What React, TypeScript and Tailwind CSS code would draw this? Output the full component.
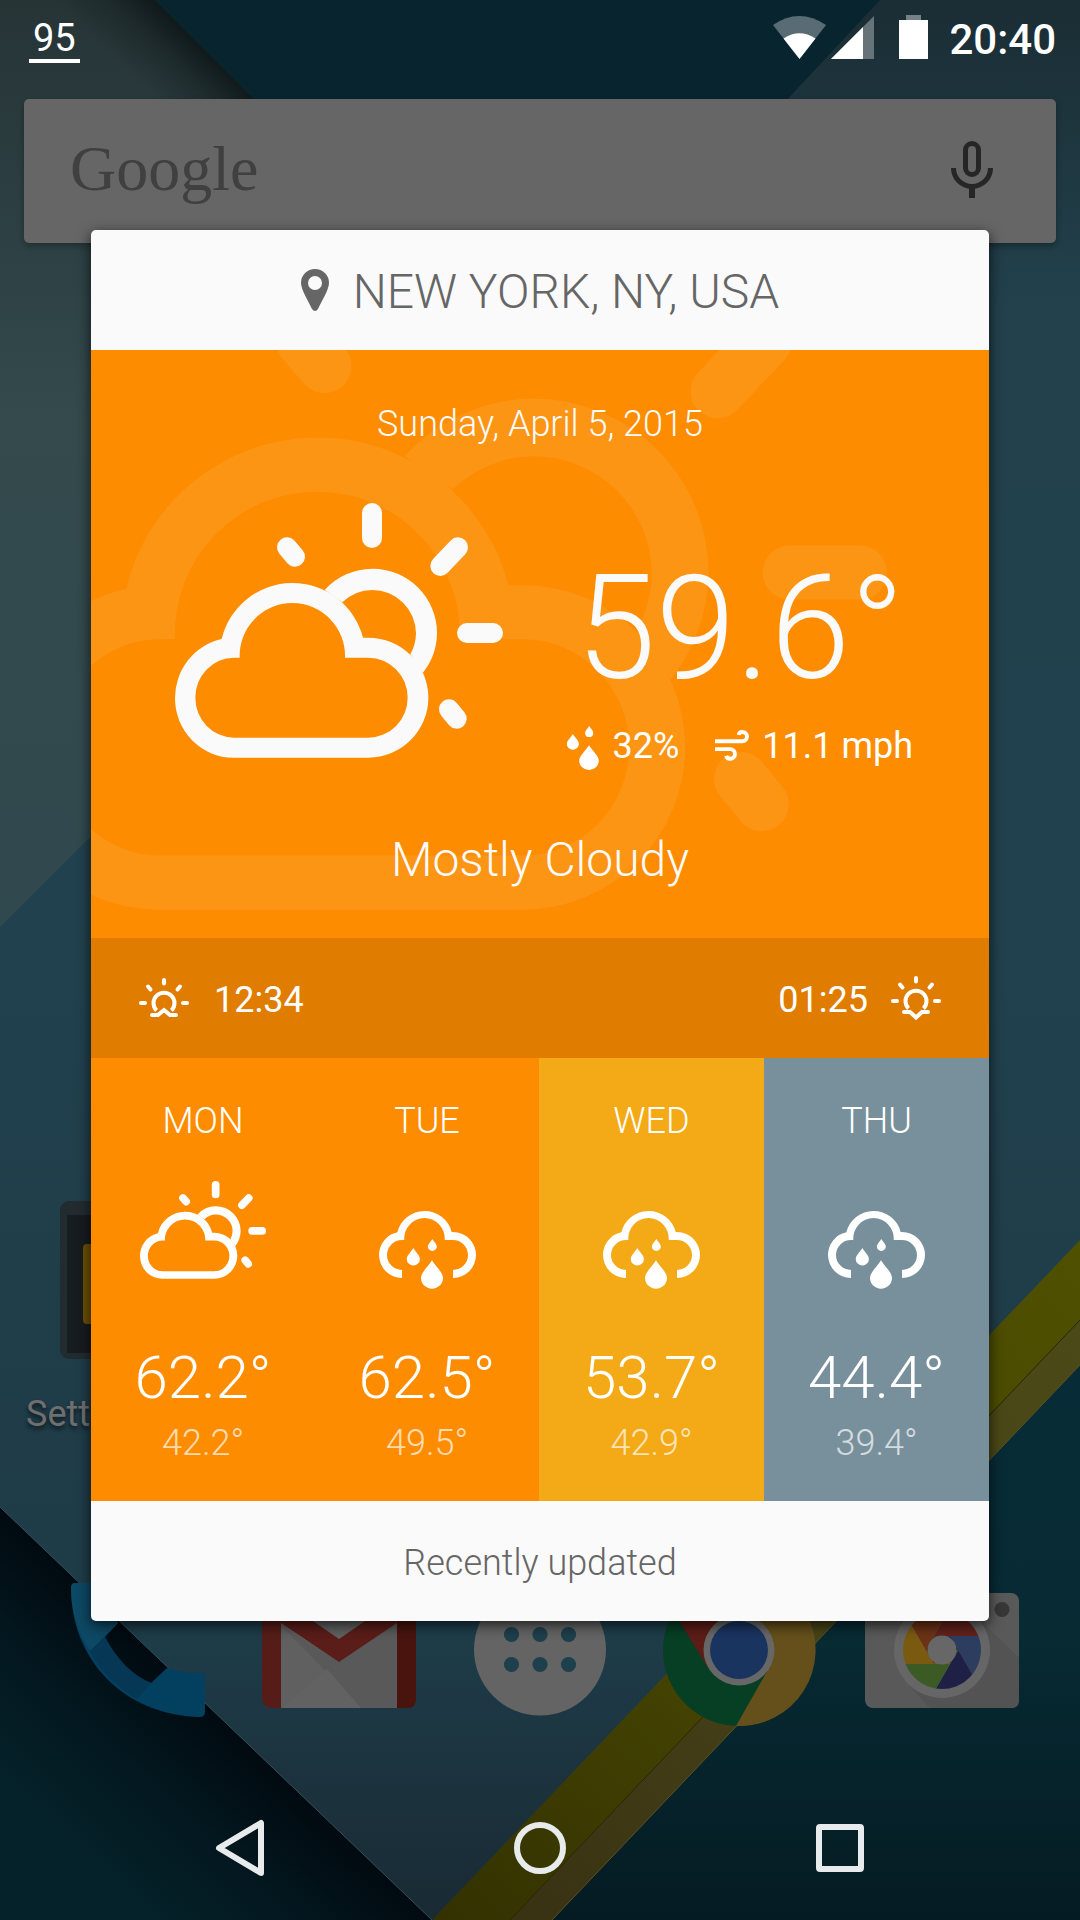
import React from "react";

const DROP = "M0 0C11 19 33 36 33 53A33 32 0 0 1-33 53C-33 36-11 19 0 0Z";

function PartlyCloudy({ className }: { className?: string }) {
  return (
    <svg viewBox="75 69 984 764" className={className} aria-hidden="true">
      <path
        fill="currentColor"
        fillRule="evenodd"
        d="M250 833A175 178 0 0 1 75 655A178 181 0 0 1 215 477A218.4 218.4 0 0 1 639 473H655A180 180 0 0 1 655 833ZM252 773H655A118 120 0 0 0 655 533H585A158.1 158.1 0 1 0 269 533Q262 533 252 533A116 120 0 0 0 252 773Z"
      />
      <path
        fill="currentColor"
        d="M524 330A194 194 0 0 1 667 266A194 194 0 0 1 861 460A194 194 0 0 1 819 578L781 523A131 131 0 0 0 798 460A131 131 0 0 0 667 330A131 131 0 0 0 577 367Z"
      />
      <g stroke="currentColor" strokeWidth="60" strokeLinecap="round">
        <path d="M666 99V174" />
        <path d="M951 459H1029" />
        <path d="M924 202L871 258" />
        <path d="M411 202L435 230" />
        <path d="M897 688L920 716" />
      </g>
    </svg>
  );
}

function Rain({ className }: { className?: string }) {
  return (
    <svg viewBox="0 0 291 236" className={className} fill="currentColor" aria-hidden="true">
      <path d="M69 204A69 69 0 0 1 0 135A69 69 0 0 1 55 67A84 84 0 0 1 218 66H222A69 69 0 0 1 222 204V180A45 45 0 0 0 222 90H197A60.7 60.7 0 1 0 76 90H69A45 45 0 0 0 69 180Z" />
      <path transform="translate(159 151)" d={DROP} />
      <path transform="translate(103 114) scale(.6 .62)" d={DROP} />
      <path transform="translate(160 87) scale(.41 .42)" d={DROP} />
    </svg>
  );
}

function Humidity() {
  return (
    <svg viewBox="84 546 96 144" className="h-12 w-8" fill="currentColor" aria-hidden="true">
      <path transform="translate(150 616) scale(.89 .87)" d={DROP} />
      <path transform="translate(101.5 582) scale(.55 .56)" d={DROP} />
      <path transform="translate(150.500 558) scale(.37 .39)" d={DROP} />
    </svg>
  );
}

function Wind() {
  return (
    <svg viewBox="528 570 103 94" className="w-[34px]" fill="none" stroke="currentColor" strokeWidth="12" aria-hidden="true">
      <path d="M528 604H611A14 14 0 0 0 611 576Q601 576 600 585" />
      <path d="M528 628H574A14.500 14.500 0 0 1 574 657Q564 657 562 648" />
    </svg>
  );
}

function SunEdge({ rising }: { rising: boolean }) {
  return (
    <svg viewBox="0 0 52 46" className="h-[46px] w-[52px]" fill="none" stroke="currentColor" strokeWidth="4" aria-hidden="true">
      <g transform={rising ? "translate(0 2)" : undefined}>
        <path d="M18.500 33.500A10.500 10.500 0 1 1 33.500 33.500" />
        <g strokeLinecap="round">
          <path d="M26 3V6.500" />
          <path d="M3 26H7" />
          <path d="M45 26H49" />
          <path d="M10 9.500L12.500 12.500" />
          <path d="M42 9.500L39.500 12.500" />
        </g>
      </g>
      <path strokeLinecap="round" d={rising ? "M14 40H20L26 35L32 40H38" : "M14 37H20L26 42.500L32 37H38"} />
    </svg>
  );
}

function Wallpaper() {
  return (
    <svg
      viewBox="0 0 1080 1920"
      preserveAspectRatio="xMidYMid slice"
      className="h-full w-full [grid-area:1/1]"
      aria-hidden="true"
    >
      <defs>
        <linearGradient id="mid" x1="0" y1="0" x2="0" y2="1">
          <stop offset="0" stopColor="#1b2d35" />
          <stop offset=".05" stopColor="#1d333b" />
          <stop offset=".16" stopColor="#22414d" />
          <stop offset=".5" stopColor="#21414e" />
          <stop offset=".75" stopColor="#1f3c48" />
          <stop offset=".85" stopColor="#1e3c49" />
          <stop offset="1" stopColor="#192a34" />
        </linearGradient>
        <linearGradient id="left" x1="0" y1="0" x2="0" y2="1">
          <stop offset="0" stopColor="#263436" />
          <stop offset=".25" stopColor="#2d4044" />
          <stop offset=".45" stopColor="#344a4d" />
          <stop offset="1" stopColor="#30494e" />
        </linearGradient>
        <linearGradient id="leftShade" gradientUnits="userSpaceOnUse" x1="206" y1="50" x2="156" y2="100">
          <stop offset="0" stopColor="#0c1415" stopOpacity=".85" />
          <stop offset=".5" stopColor="#0c1415" stopOpacity=".3" />
          <stop offset="1" stopColor="#0c1415" stopOpacity="0" />
        </linearGradient>
        <linearGradient id="low" gradientUnits="userSpaceOnUse" x1="216" y1="1714" x2="76" y2="1860">
          <stop offset="0" stopColor="#010a10" />
          <stop offset=".45" stopColor="#03171f" />
          <stop offset="1" stopColor="#05222a" />
        </linearGradient>
        <linearGradient id="lowRight" x1="0" y1="0" x2="0" y2="1">
          <stop offset="0" stopColor="#082c37" />
          <stop offset=".5" stopColor="#072a33" />
          <stop offset="1" stopColor="#051b23" />
        </linearGradient>
        <linearGradient id="yellow" gradientUnits="userSpaceOnUse" x1="432" y1="1920" x2="1080" y2="1240">
          <stop offset="0" stopColor="#333100" />
          <stop offset=".4" stopColor="#454403" />
          <stop offset="1" stopColor="#4f5000" />
        </linearGradient>
        <linearGradient id="olive" gradientUnits="userSpaceOnUse" x1="530" y1="1920" x2="1080" y2="1340">
          <stop offset="0" stopColor="#393213" />
          <stop offset=".5" stopColor="#474318" />
          <stop offset="1" stopColor="#4b4917" />
        </linearGradient>
      </defs>
      <rect width="1080" height="1920" fill="url(#mid)" />
      <path d="M155 0H880L520 386Z" fill="#08252f" />
      <path d="M0 0H155L541 386L0 927Z" fill="url(#left)" />
      <path d="M0 0H155L541 386L0 927Z" fill="url(#leftShade)" />
      <path d="M0 1507L432 1920H0Z" fill="url(#low)" />
      <path d="M0 1507L432 1920" stroke="#35505b" strokeWidth="1" />
      <path d="M552 1920L1080 1365V1920Z" fill="url(#lowRight)" />
      <path d="M432 1920L1080 1240V1320L510 1920Z" fill="url(#yellow)" />
      <path d="M510 1920L1080 1320V1365L552 1920Z" fill="url(#olive)" />
      <path d="M510 1920L1080 1320" stroke="#2b2900" strokeWidth="1" />
      <path d="M552 1920L1080 1365" stroke="#57501f" strokeWidth="1" />
    </svg>
  );
}

function PhoneIcon() {
  return (
    <svg viewBox="0 0 156 156" className="size-[156px]" aria-hidden="true">
      <path
        d="M15 11H50C50 26 53 40 58 51L45 65C57 88 72 103 91 111L107 96C120 100 132 101 141 101Q145 101 145 105V140Q145 145 140 145C62 143 11 86 11 16Q11 11 15 11Z"
        fill="#033f5e"
      />
      <path d="M15 11H50C50 26 53 40 58 51L30 79C17 60 11 38 11 16Q11 11 15 11Z" fill="#0d4864" />
      <path d="M45 65C57 88 72 103 91 111L77 127Q46 109 30 79Z" fill="#063755" />
    </svg>
  );
}

function MailIcon() {
  return (
    <svg viewBox="0 0 156 156" className="size-[156px]" aria-hidden="true">
      <rect x="1" y="21" width="154" height="115" rx="9" fill="#561d18" />
      <path d="M136 21H146Q155 21 155 30V127Q155 136 146 136H136Z" fill="#49130e" />
      <rect x="20" y="21" width="116" height="115" fill="#606060" />
      <path d="M20 53L100 136H136V51L78 90Z" fill="#595959" />
      <path d="M20 136L66 97L100 136Z" fill="#626262" />
      <path d="M20 51L78 90L136 51V27L78 67L20 27Z" fill="#5a1d19" />
    </svg>
  );
}

function AppsIcon() {
  return (
    <svg viewBox="0 0 156 156" className="size-[156px]" aria-hidden="true">
      <circle cx="78" cy="77.500" r="66" fill="#646464" />
      <g fill="#1e3f4c">
        {[49.5, 78, 106.5].map((x) => (
          <React.Fragment key={x}>
            <circle cx={x} cy="32.500" r="7.600" />
            <circle cx={x} cy="62.500" r="7.600" />
            <circle cx={x} cy="92.500" r="7.600" />
          </React.Fragment>
        ))}
      </g>
    </svg>
  );
}

function ChromeIcon() {
  return (
    <svg viewBox="2 0 156 156" className="size-[156px]" aria-hidden="true">
      <circle cx="78" cy="78" r="76" fill="#063f24" />
      <path d="M108 96L75 154A76 76 0 0 0 146 43H78Z" fill="#65501b" />
      <path d="M12 39A76 76 0 0 1 146 43H78L47 96L44 91Z" fill="#5c1d17" />
      <circle cx="78" cy="78" r="35.500" fill="#676767" />
      <circle cx="78" cy="78" r="29" fill="#1a3460" />
    </svg>
  );
}

function CameraIcon() {
  const blades: [number, string][] = [
    [0, "#2c3d5f"],
    [60, "#1f2046"],
    [120, "#3c5a24"],
    [180, "#7a5a10"],
    [240, "#6b3215"],
    [300, "#62221c"],
  ];
  return (
    <svg viewBox="0 0 156 156" className="size-[156px]" aria-hidden="true">
      <rect x="1" y="21" width="154" height="115" rx="8" fill="#595959" />
      <path d="M112 44L155 86V128Q155 136 147 136H66L44 112Z" fill="#535353" />
      <circle cx="138" cy="37.500" r="7.500" fill="#373737" />
      <circle cx="78" cy="78" r="48" fill="#666666" />
      <g transform="translate(78 78)">
        {blades.map(([angle, fill]) => (
          <path
            key={angle}
            transform={`rotate(${angle})`}
            d="M0 0L-8-14H36.400A39 39 0 0 1 30.300 24.500L8.100-14Z"
            fill={fill}
          />
        ))}
        <circle r="14.500" fill="#676767" />
      </g>
    </svg>
  );
}

function HomeScreen() {
  const dock: [string, React.ReactNode][] = [
    ["Phone", <PhoneIcon />],
    ["Gmail", <MailIcon />],
    ["Apps", <AppsIcon />],
    ["Chrome", <ChromeIcon />],
    ["Camera", <CameraIcon />],
  ];
  return (
    <div className="flex flex-col justify-between pt-[99px] pb-48 [grid-area:1/1]">
      <div className="mx-6 flex h-36 items-center justify-between rounded-[5px] bg-[#666666] pr-[63px] pb-1 pl-[46px] shadow-[0_3px_6px_rgba(0,0,0,0.3)]">
        <button type="button" className="font-['Liberation_Serif',serif] text-[64px] leading-[72px] text-[#404040]">
          Google
        </button>
        <button type="button" aria-label="Voice search">
          <svg viewBox="0 0 42 57" className="h-[57px] w-[42px]" fill="none" stroke="#262626" strokeWidth="5" aria-hidden="true">
            <rect x="14.500" y="2.500" width="13" height="31" rx="6.500" />
            <path d="M2.500 27A18.500 18.500 0 0 0 39.500 27" />
            <path d="M21 46V57" strokeWidth="6" />
          </svg>
        </button>
      </div>
      <div>
        <button type="button" className="mb-[137px] flex flex-col items-start pl-[26px] text-left">
          <svg viewBox="0 0 158 158" className="mb-[34px] ml-[34px] size-[158px]" aria-hidden="true">
            <rect width="158" height="158" rx="9" fill="#222b30" />
            <rect x="7" y="14" width="144" height="138" fill="#171c20" />
            <rect x="23" y="43" width="112" height="80" rx="4" fill="#6b5004" />
          </svg>
          <span className="text-[36px] leading-[42px] text-[#6f6f6f] [text-shadow:0_3px_4px_rgba(0,0,0,0.6)]">Settings</span>
        </button>
        <div className="grid grid-cols-5 justify-items-center px-[38px]">
          {dock.map(([name, icon]) => (
            <button key={name} type="button" aria-label={name}>
              {icon}
            </button>
          ))}
        </div>
      </div>
    </div>
  );
}

function StatusBar() {
  return (
    <header className="flex h-[75px] items-start justify-between pr-6 pl-[29px] text-white">
      <span className="mt-[17px] border-b-4 border-white px-1 text-[38px] leading-[42px]">95</span>
      <div className="flex pt-[15px]">
        <svg viewBox="0 0 53 44" className="h-11 w-[53px]" aria-hidden="true">
          <path d="M26.500 44L0 10Q26 -8 53 10Z" fill="#fff" fillOpacity=".33" />
          <path d="M26.500 44L10.500 23.500Q26.500 13 42.500 23.500Z" fill="#fff" />
        </svg>
        <svg viewBox="0 0 43 44" className="ml-[5px] h-11 w-[43px]" aria-hidden="true">
          <path d="M0 44L43 1V44Z" fill="#fff" fillOpacity=".33" />
          <path d="M0 44L32 12V44Z" fill="#fff" />
        </svg>
        <svg viewBox="0 0 29 44" className="ml-[25px] h-11 w-[29px]" aria-hidden="true">
          <path d="M7 0H22V5H7Z" fill="#fff" fillOpacity=".4" />
          <path d="M0 5H29V44H0Z" fill="#fff" />
        </svg>
        <time className="ml-[21px] text-[42px] leading-[50px] font-medium">20:40</time>
      </div>
    </header>
  );
}

type Day = { name: string; high: string; low: string; tone: string; sunny?: boolean };

const days: Day[] = [
  { name: "MON", high: "62.2°", low: "42.2°", tone: "bg-[#fd8c00]", sunny: true },
  { name: "TUE", high: "62.5°", low: "49.5°", tone: "bg-[#fd8c00]" },
  { name: "WED", high: "53.7°", low: "42.9°", tone: "bg-[#f4a917]" },
  { name: "THU", high: "44.4°", low: "39.4°", tone: "bg-[#78909c]" },
];

function WeatherCard() {
  return (
    <section
      role="dialog"
      aria-label="Weather"
      className="w-full overflow-hidden rounded-[5px] bg-[#fafafa] text-[#fafafa] shadow-[0_4px_14px_rgba(0,0,0,0.7)]"
    >
      <h1 className="flex h-[120px] items-center justify-center gap-6 text-[48px] leading-[56px] font-light text-[#666666]">
        <svg viewBox="0 0 28 42" className="h-[42px] w-7" aria-hidden="true">
          <path
            fill="currentColor"
            fillRule="evenodd"
            d="M14 0A14 14 0 0 1 28 14C28 21 20 33 17 40Q14 44 11 40C8 33 0 21 0 14A14 14 0 0 1 14 0ZM14 7A7 7 0 1 0 14 21A7 7 0 1 0 14 7Z"
          />
        </svg>
        <span className="pt-[3px]">NEW YORK, NY, USA</span>
      </h1>

      <div className="relative overflow-hidden bg-[#fd8c00] pt-[53px] pb-[50px]">
        <PartlyCloudy className="absolute -top-[129px] -left-[91px] w-[887px] max-w-none opacity-[0.08]" />
        <div className="relative">
          <p className="text-center text-[36px] leading-[43px] font-light">Sunday, April 5, 2015</p>
          <div className="mt-[57px] flex items-start justify-between pr-[76px] pl-[84px]">
            <PartlyCloudy className="w-[328px]" />
            <div className="flex flex-col items-center pt-[54px]">
              <p className="text-[144px] leading-[144px] font-light">59.6°</p>
              <div className="mt-[21px] flex items-center text-[36px] leading-[42px] text-white">
                <Humidity />
                <span className="ml-[13px]">32%</span>
                <span className="ml-9">
                  <Wind />
                </span>
                <span className="ml-[13px]">11.1 mph</span>
              </div>
            </div>
          </div>
          <p className="mt-[62px] text-center text-[48px] leading-[56px] font-light">Mostly Cloudy</p>
        </div>
      </div>

      <div className="flex h-[120px] items-center justify-between bg-[#e07c00] px-[47px] text-[36px] leading-[42px] text-white">
        <div className="flex items-center gap-6">
          <SunEdge rising />
          <time className="pt-[3px]">12:34</time>
        </div>
        <div className="flex items-center gap-[22px]">
          <time className="pt-[3px]">01:25</time>
          <SunEdge rising={false} />
        </div>
      </div>

      <ul className="grid grid-cols-[224fr_224fr_225fr_225fr] font-light text-white">
        {days.map((day) => (
          <li key={day.name} className={`flex flex-col items-center pt-[42px] pb-[37px] ${day.tone}`}>
            <span className="text-[36px] leading-[42px]">{day.name}</span>
            <div className="mt-[39px] flex h-[109px] flex-col">
              {day.sunny ? <PartlyCloudy className="w-[126px]" /> : <Rain className="mt-[29px] w-[97px]" />}
            </div>
            <span className="mt-[53px] text-[60px] leading-[70px]">{day.high}</span>
            <span className="mt-[9px] text-[36px] leading-[42px] text-white/70">{day.low}</span>
          </li>
        ))}
      </ul>

      <footer className="flex h-[120px] items-center justify-center pt-[3px] text-[36px] leading-[42px] font-light text-[#666666]">
        Recently updated
      </footer>
    </section>
  );
}

function NavBar() {
  return (
    <nav className="grid h-36 grid-cols-3 items-center justify-items-center px-[90px] text-[#e8ebeb]">
      <button type="button" aria-label="Back">
        <svg viewBox="0 0 50 58" className="h-[58px] w-[50px]" fill="none" stroke="currentColor" strokeWidth="6" strokeLinejoin="round" aria-hidden="true">
          <path d="M46 4V54L4 29Z" />
        </svg>
      </button>
      <button type="button" aria-label="Home" className="size-[52px] rounded-full border-6 border-current" />
      <button type="button" aria-label="Recent apps" className="size-12 rounded-[4px] border-6 border-current" />
    </nav>
  );
}

export default function App() {
  return (
    <div className="grid min-h-screen overflow-hidden bg-[#1f3c48] font-['Roboto',sans-serif]">
      <div className="grid h-full min-h-0 [contain:size] [grid-area:1/1]">
        <Wallpaper />
      </div>
      <HomeScreen />
      <div className="flex flex-col [grid-area:1/1]">
        <StatusBar />
        <main className="flex flex-1 items-center px-[91px]">
          <WeatherCard />
        </main>
        <NavBar />
      </div>
    </div>
  );
}
